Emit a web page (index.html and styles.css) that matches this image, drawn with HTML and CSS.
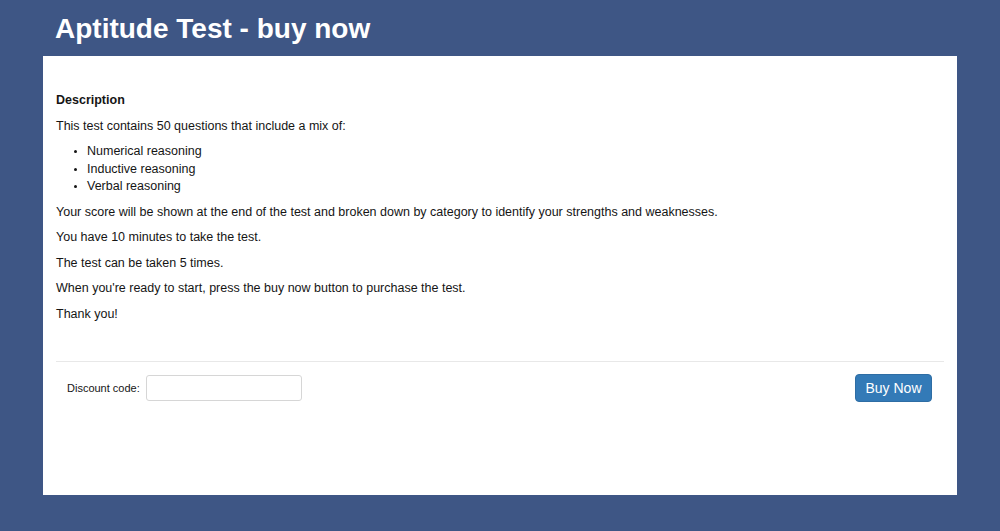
FILE: index.html
```html
<!DOCTYPE html>
<html>
<head>
<meta charset="utf-8">
<link rel="stylesheet" href="styles.css">
</head>
<body>
<div class="page">
  <h1 class="title">Aptitude Test - buy now</h1>
  <div class="card">
    <div class="content">
      <p class="heading">Description</p>
      <p>This test contains 50 questions that include a mix of:</p>
      <ul class="list">
        <li>Numerical reasoning</li>
        <li>Inductive reasoning</li>
        <li>Verbal reasoning</li>
      </ul>
      <p>Your score will be shown at the end of the test and broken down by category to identify your strengths and weaknesses.</p>
      <p>You have 10 minutes to take the test.</p>
      <p>The test can be taken 5 times.</p>
      <p>When you're ready to start, press the buy now button to purchase the test.</p>
      <p>Thank you!</p>
    </div>
    <hr class="divider">
    <div class="footer">
      <div class="discount">
        <label class="label">Discount code:</label>
        <input class="input" type="text">
      </div>
      <button class="buy">Buy Now</button>
    </div>
  </div>
</div>
</body>
</html>
```
FILE: styles.css
```css
html, body {
  margin: 0;
  padding: 0;
}
body {
  background: #3e5685;
  font-family: "Liberation Sans", Arial, sans-serif;
  color: #151515;
}
.page {
  width: 914px;
  margin: 0 auto;
}
.title {
  margin: 0;
  padding: 13px 12px 0 12px;
  height: 43px;
  font-size: 28px;
  line-height: 32px;
  font-weight: bold;
  color: #ffffff;
}
.card {
  background: #ffffff;
  height: 439px;
  box-sizing: border-box;
  padding: 0 13px;
}
.content {
  padding: 36px 0 0 0;
  font-size: 12.5px;
  line-height: 17.5px;
}
.content p {
  margin: 0 0 8px 0;
}
.heading {
  font-weight: bold;
}
.list {
  margin: 0 0 8px 0;
  padding-left: 31px;
}
.list li::marker {
  font-size: 10px;
}
.divider {
  margin: 38px 0 0 0;
  border: 0;
  border-top: 1px solid #e8e8e8;
  height: 0;
}
.footer {
  display: flex;
  justify-content: space-between;
  align-items: center;
  padding: 12px 12px 0 11px;
}
.discount {
  display: flex;
  align-items: center;
  gap: 6px;
}
.label {
  font-size: 11px;
}
.input {
  width: 156px;
  height: 26px;
  box-sizing: border-box;
  border: 1px solid #d6d6d6;
  border-radius: 3px;
  padding: 4px 8px;
  font-family: "Liberation Sans", Arial, sans-serif;
  font-size: 13px;
}
.buy {
  width: 77px;
  height: 28px;
  background: #337ab7;
  border: 1px solid #2e6da4;
  border-radius: 4px;
  color: #ffffff;
  font-family: "Liberation Sans", Arial, sans-serif;
  font-size: 14px;
  padding: 0;
}
```
